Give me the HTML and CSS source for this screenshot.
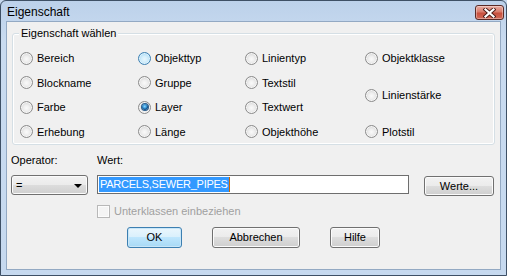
FILE: index.html
```html
<!DOCTYPE html>
<html lang="de">
<head>
<meta charset="utf-8">
<title>Eigenschaft</title>
<link rel="stylesheet" href="styles.css">
</head>
<body>
<div class="window">
  <div class="titlebar">
    <span class="title">Eigenschaft</span>
    <span class="close">
      <svg width="13" height="10" viewBox="0 0 13 10">
        <path d="M2.5 1.5 L10.5 8.5 M10.5 1.5 L2.5 8.5" stroke="#4b1c18" stroke-width="4" stroke-linecap="square"/>
        <path d="M2.5 1.5 L10.5 8.5 M10.5 1.5 L2.5 8.5" stroke="#ffffff" stroke-width="2.2" stroke-linecap="square"/>
      </svg>
    </span>
  </div>
  <div class="client">
    <div class="group">
      <div class="legend">Eigenschaft wählen</div>
      <div class="radios">
        <div class="opt"><span class="radio"></span>Bereich</div>
        <div class="opt"><span class="radio hover"></span>Objekttyp</div>
        <div class="opt"><span class="radio"></span>Linientyp</div>
        <div class="opt"><span class="radio"></span>Objektklasse</div>
        <div class="opt"><span class="radio"></span>Blockname</div>
        <div class="opt"><span class="radio"></span>Gruppe</div>
        <div class="opt"><span class="radio"></span>Textstil</div>
        <div class="opt span2"><span class="radio"></span>Linienstärke</div>
        <div class="opt"><span class="radio"></span>Farbe</div>
        <div class="opt"><span class="radio checked"></span>Layer</div>
        <div class="opt"><span class="radio"></span>Textwert</div>
        <div class="opt"><span class="radio"></span>Erhebung</div>
        <div class="opt"><span class="radio"></span>Länge</div>
        <div class="opt"><span class="radio"></span>Objekthöhe</div>
        <div class="opt"><span class="radio"></span>Plotstil</div>
      </div>
    </div>
    <div class="fields">
      <div class="lbl">Operator:</div>
      <div class="lbl">Wert:</div>
      <div></div>
      <div class="combo"><span class="combo-text">=</span><span class="arrow"></span></div>
      <div class="textbox"><span class="sel">PARCELS,SEWER_PIPES</span></div>
      <div class="btn werte">Werte...</div>
      <div></div>
      <div class="check"><span class="box"></span>Unterklassen einbeziehen</div>
    </div>
    <div class="buttons">
      <div class="btn default ok">OK</div>
      <div class="btn cancel">Abbrechen</div>
      <div class="btn help">Hilfe</div>
    </div>
  </div>
</div>
</body>
</html>
```
FILE: styles.css
```css
* { box-sizing: border-box; }
html, body { margin: 0; padding: 0; }
body {
  width: 507px;
  height: 276px;
  font-family: "Liberation Sans", Arial, sans-serif;
  font-size: 11px;
  color: #000;
  background: #c6d8ee;
}
.window {
  width: 507px;
  height: 276px;
  border: 1px solid #3e5065;
  border-radius: 6px 6px 0 0;
  background: linear-gradient(#bcd1ea, #c9dbf0 40px, #c6d9ef);
  display: flex;
  flex-direction: column;
  padding: 0 5px 5px;
  overflow: hidden;
}
.titlebar {
  height: 20px;
  margin: 0 -5px;
  padding-left: 6px;
  display: flex;
  justify-content: space-between;
  align-items: flex-start;
}
.title {
  font-size: 12px;
  line-height: 14px;
  padding-top: 4px;
}
.close {
  margin-top: 4px;
  margin-right: 2px;
  width: 29px;
  height: 15px;
  border: 1px solid #5a2a26;
  border-radius: 3px;
  background: linear-gradient(#e8aca2, #d97c6c 45%, #c8503e 55%, #d26a58);
  display: flex;
  align-items: center;
  justify-content: center;
  box-shadow: inset 0 0 0 1px rgba(255,255,255,0.35);
}
.close svg { display: block; }
.client {
  flex: 1;
  border: 1px solid #93a9c3;
  background: #f0f0f0;
  padding: 0 5px;
}
.group {
  margin-top: 11px;
  height: 112px;
  border: 1px solid #d5dfe5;
  border-radius: 3px;
  box-shadow: inset 0 0 0 1px #fff;
}
.legend {
  width: fit-content;
  margin: -7px 0 0 6px;
  padding: 0 2px;
  line-height: 13px;
  background: #f0f0f0;
  color: #000;
}
.radios {
  margin-top: 6px;
  padding-left: 7px;
  display: grid;
  grid-template-columns: 118px 107px 120px 1fr;
  grid-auto-rows: 24.5px;
}
.opt {
  display: flex;
  align-items: center;
  gap: 4px;
  white-space: nowrap;
}
.opt.span2 { grid-row: span 2; }
.radio {
  width: 13px;
  height: 13px;
  flex: none;
  border-radius: 50%;
  border: 1px solid #8b8b8b;
  background: radial-gradient(circle at 50% 55%, #fafafa 0, #eeeeee 3px, #d6d6d6 6px);
  box-shadow: inset 0 0 0 1px #f6f6f6;
  display: flex;
  align-items: center;
  justify-content: center;
}
.radio.hover {
  border-color: #3c7fb1;
  background: radial-gradient(circle at 50% 55%, #e8f6fd 0, #d3eefb 3px, #a9dbf6 6px);
  box-shadow: inset 0 0 0 1px #dff2fc;
}
.radio.checked::after {
  content: "";
  width: 6px;
  height: 6px;
  border-radius: 50%;
  background: radial-gradient(circle at 45% 40%, #8fd8ff 0, #2f8fd0 2px, #0f4d87 3px);
  box-shadow: 0 0 0 1px #2a5d8c;
}
.fields {
  margin-top: 9px;
  margin-left: -1px;
  display: grid;
  grid-template-columns: 77px 312px 76px;
  column-gap: 9px;
  row-gap: 8px;
}
.lbl {
  line-height: 13px;
  height: 13px;
}
.combo {
  height: 20px;
  border: 1px solid #707070;
  border-radius: 3px;
  background: linear-gradient(#f2f2f2, #ebebeb 50%, #dddddd 50%, #cfcfcf);
  box-shadow: inset 0 0 0 1px #fbfbfb;
  display: flex;
  align-items: center;
  justify-content: space-between;
  padding: 0 5px 0 4px;
}
.combo-text { line-height: 13px; }
.arrow {
  width: 0;
  height: 0;
  border-left: 4px solid transparent;
  border-right: 4px solid transparent;
  border-top: 4px solid #000;
  margin-top: 1px;
}
.textbox {
  height: 19px;
  border: 1px solid #6e6e6e;
  background: #fff;
  padding: 1px 1px;
  display: flex;
  align-items: stretch;
}
.sel {
  background: #3399ff;
  color: #fff;
  line-height: 15px;
  padding: 0 1px;
  letter-spacing: -0.25px;
  border-right: 1px solid #cc6600;
}
.btn {
  height: 21px;
  border: 1px solid #707070;
  border-radius: 3px;
  background: linear-gradient(#f2f2f2, #ebebeb 50%, #dddddd 50%, #cfcfcf);
  box-shadow: inset 0 0 0 1px #fbfbfb;
  display: flex;
  align-items: center;
  justify-content: center;
  line-height: 13px;
}
.werte {
  height: 20px;
  margin-top: 1px;
  margin-left: 6px;
  width: 70px;
}
.check {
  grid-column: 2 / 4;
  margin-top: 1px;
  display: flex;
  align-items: center;
  gap: 4px;
  color: #a0a0a0;
  line-height: 13px;
}
.box {
  width: 13px;
  height: 13px;
  border: 1px solid #b8b8b8;
  background: #f4f4f4;
  box-shadow: inset 0 0 0 1px #fcfcfc;
}
.buttons {
  margin-top: 9px;
  padding-left: 115px;
  display: flex;
  gap: 30px;
}
.ok { width: 55px; }
.cancel { width: 88px; }
.help { width: 50px; }
.btn.default {
  border-color: #3c7fb1;
  background: linear-gradient(#eaf6fd, #d9f0fc 50%, #bee6fd 50%, #a7d9f5);
  box-shadow: inset 0 0 0 1px #c8e6f8;
}
```
